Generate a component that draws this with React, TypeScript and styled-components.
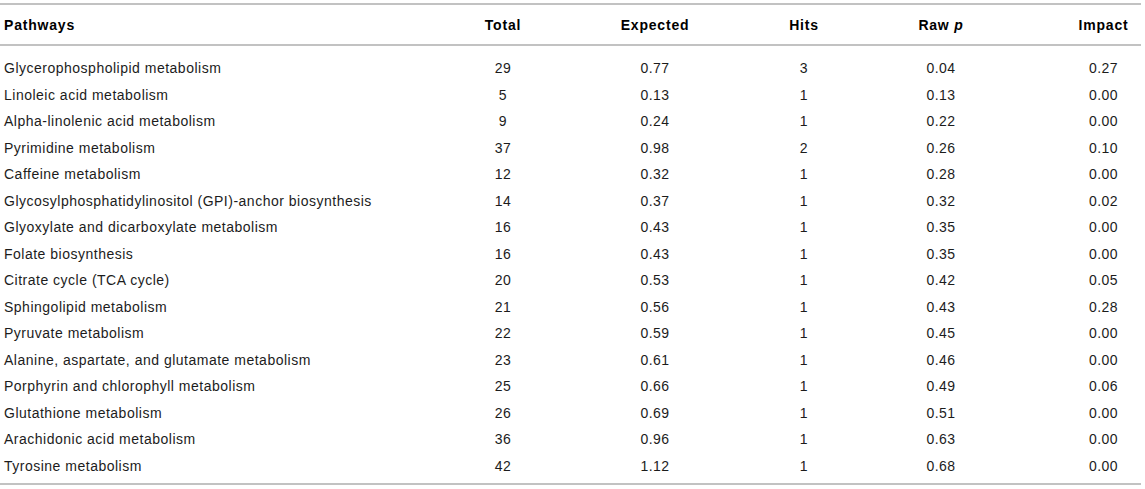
import React from "react"
import styled, { createGlobalStyle } from "styled-components"

const GlobalStyle = createGlobalStyle`
  body {
    margin: 0;
    background: #ffffff;
    font-family: "Liberation Sans", Arial, sans-serif;
  }
`

const COLUMNS = "430px 146px 158px 140px 134px 133px"

const Table = styled.div`
  width: 1141px;
  padding-top: 3px;
  color: #1c1c1c;
  font-size: 14px;
  letter-spacing: 0.5px;
`

const Rule = styled.div`
  height: 2px;
  background: #c2c2c2;
`

const Row = styled.div<{ head?: boolean }>`
  display: grid;
  grid-template-columns: ${COLUMNS};
  align-items: center;
  height: ${p => (p.head ? "39px" : "26.5px")};
  font-weight: ${p => (p.head ? "bold" : "normal")};
  letter-spacing: ${p => (p.head ? "0.8px" : "0.5px")};
  color: ${p => (p.head ? "#000" : "#1c1c1c")};
`

const Body = styled.div`
  padding: 9px 0 4px;
`

const Cell = styled.div<{ align?: "left" | "center"; padLeft?: number }>`
  text-align: ${p => p.align || "center"};
  padding-left: ${p => p.padLeft || 0}px;
  white-space: nowrap;
`

const rows: [string, string, string, string, string, string][] = [
  ["Glycerophospholipid metabolism", "29", "0.77", "3", "0.04", "0.27"],
  ["Linoleic acid metabolism", "5", "0.13", "1", "0.13", "0.00"],
  ["Alpha-linolenic acid metabolism", "9", "0.24", "1", "0.22", "0.00"],
  ["Pyrimidine metabolism", "37", "0.98", "2", "0.26", "0.10"],
  ["Caffeine metabolism", "12", "0.32", "1", "0.28", "0.00"],
  ["Glycosylphosphatidylinositol (GPI)-anchor biosynthesis", "14", "0.37", "1", "0.32", "0.02"],
  ["Glyoxylate and dicarboxylate metabolism", "16", "0.43", "1", "0.35", "0.00"],
  ["Folate biosynthesis", "16", "0.43", "1", "0.35", "0.00"],
  ["Citrate cycle (TCA cycle)", "20", "0.53", "1", "0.42", "0.05"],
  ["Sphingolipid metabolism", "21", "0.56", "1", "0.43", "0.28"],
  ["Pyruvate metabolism", "22", "0.59", "1", "0.45", "0.00"],
  ["Alanine, aspartate, and glutamate metabolism", "23", "0.61", "1", "0.46", "0.00"],
  ["Porphyrin and chlorophyll metabolism", "25", "0.66", "1", "0.49", "0.06"],
  ["Glutathione metabolism", "26", "0.69", "1", "0.51", "0.00"],
  ["Arachidonic acid metabolism", "36", "0.96", "1", "0.63", "0.00"],
  ["Tyrosine metabolism", "42", "1.12", "1", "0.68", "0.00"],
]

const DataRow = ({ cells }: { cells: string[] }) => (
  <Row>
    <Cell align="left" padLeft={4}>{cells[0]}</Cell>
    <Cell>{cells[1]}</Cell>
    <Cell>{cells[2]}</Cell>
    <Cell>{cells[3]}</Cell>
    <Cell>{cells[4]}</Cell>
    <Cell padLeft={58}>{cells[5]}</Cell>
  </Row>
)

export default function App() {
  return (
    <>
      <GlobalStyle />
      <Table>
        <Rule />
        <Row head>
          <Cell align="left" padLeft={4}>Pathways</Cell>
          <Cell>Total</Cell>
          <Cell>Expected</Cell>
          <Cell>Hits</Cell>
          <Cell>
            Raw <i>p</i>
          </Cell>
          <Cell padLeft={58}>Impact</Cell>
        </Row>
        <Rule />
        <Body>
          {rows.map(r => (
            <DataRow key={r[0]} cells={r} />
          ))}
        </Body>
        <Rule />
      </Table>
    </>
  )
}
